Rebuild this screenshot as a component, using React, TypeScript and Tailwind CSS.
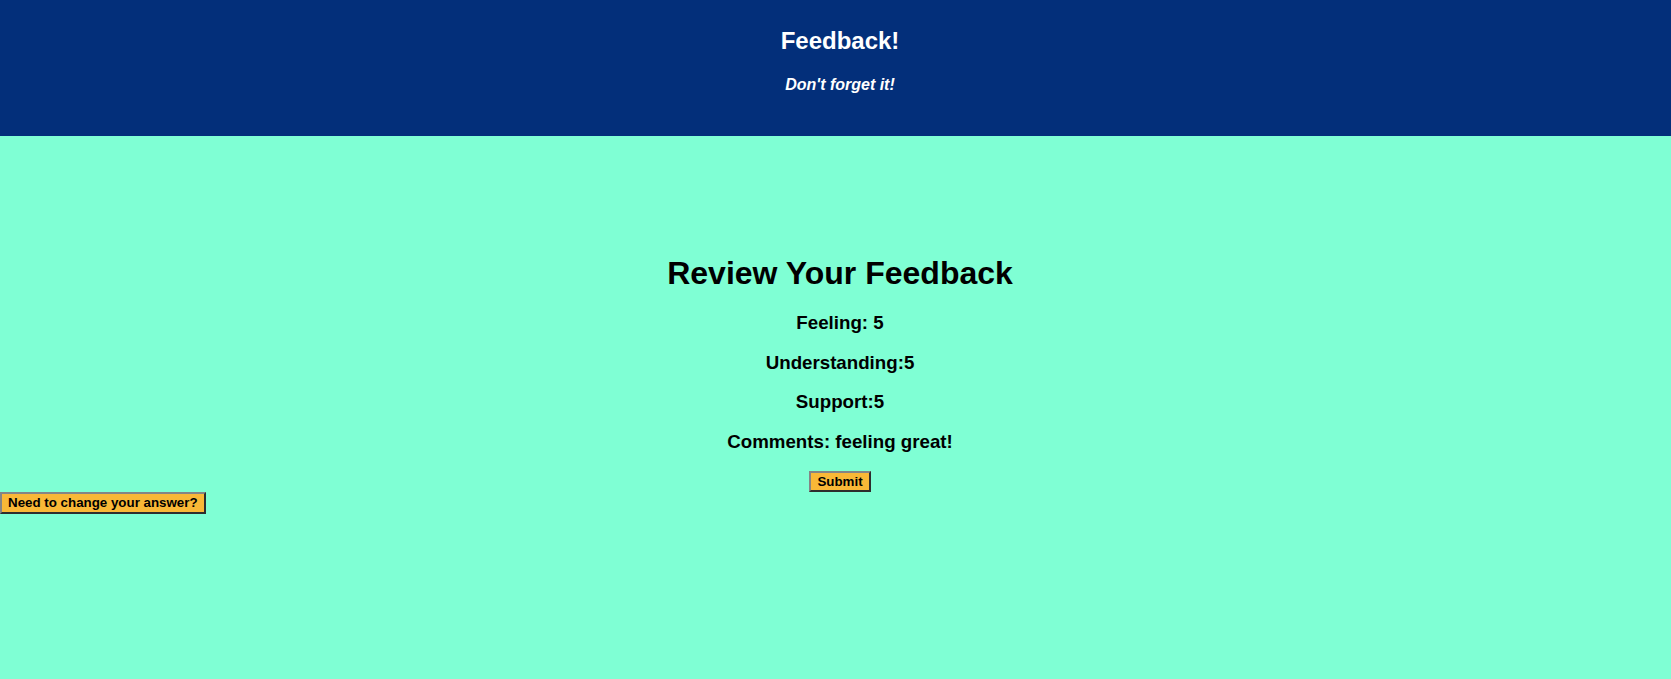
import React from 'react';

const fontStack = { fontFamily: '"Liberation Sans", Arial, Helvetica, sans-serif' };

const Review: React.FC = () => {
    const answers = [
        'Feeling: 5',
        'Understanding:5',
        'Support:5',
        'Comments: feeling great!',
    ];

    return (
        <div className="text-center pl-[9px] pt-[119px]">
            <h1 className="text-[32px] leading-[37px] font-bold text-black">Review Your Feedback</h1>
            <div className="flex flex-col gap-[18px] mt-[20px]">
                {answers.map((line) => (
                    <h3 key={line} className="text-[18.72px] leading-[21.5px] font-bold text-black">
                        {line}
                    </h3>
                ))}
            </div>
            <div className="flex justify-center mt-[19px]">
                <button className="bg-[#f9b837] text-black text-[13.33px] leading-[15.3px] font-bold px-[6px] py-[1px] border-2 border-t-[#858585] border-l-[#858585] border-b-[#2e2e2e] border-r-[#2e2e2e]">
                    Submit
                </button>
            </div>
        </div>
    );
};

export default function App() {
    return (
        <div className="min-h-screen bg-[#7fffd4]" style={fontStack}>
            {/* Header */}
            <header className="h-[136px] bg-[#032f7a] text-white text-center pl-[9px] pt-[27px]">
                <h1 className="text-[24px] leading-[28px] font-bold">Feedback!</h1>
                <h4 className="mt-[21px] text-[16px] leading-[18px] font-bold italic">Don't forget it!</h4>
            </header>

            <Review />

            <div className="flex">
                <button className="bg-[#f9b837] text-black text-[13.33px] leading-[15.3px] font-bold px-[6px] py-[1px] border-2 border-t-[#858585] border-l-[#858585] border-b-[#2e2e2e] border-r-[#2e2e2e]">
                    Need to change your answer?
                </button>
            </div>
        </div>
    );
}
